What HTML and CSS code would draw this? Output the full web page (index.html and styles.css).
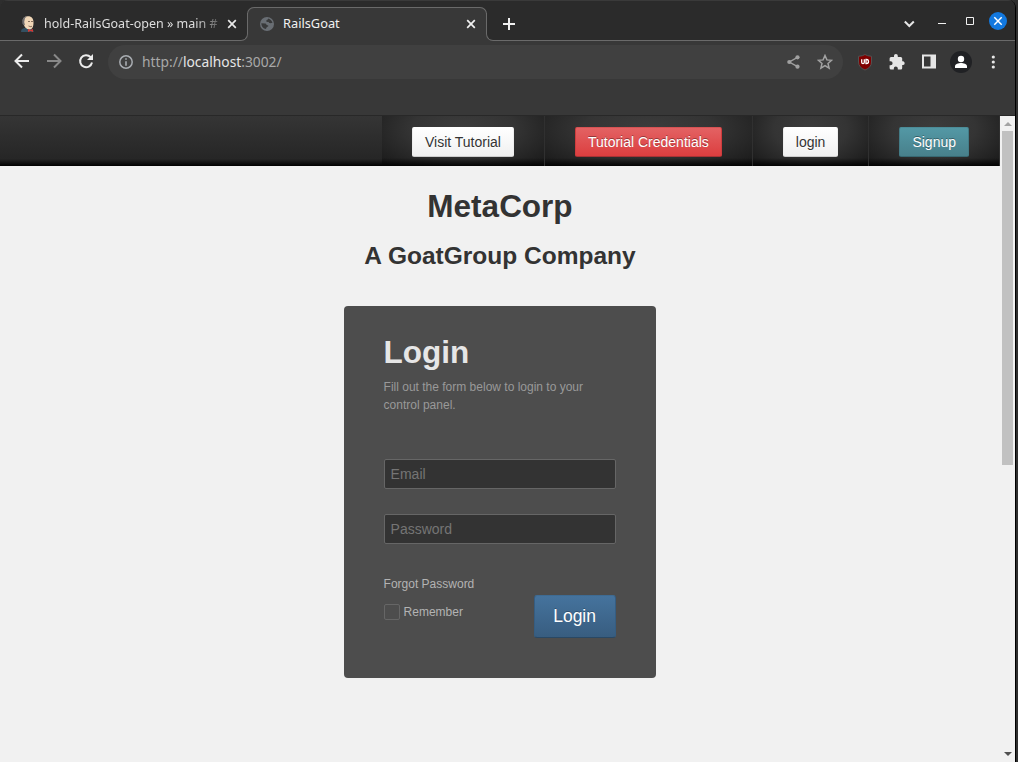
FILE: index.html
```html
<!DOCTYPE html>
<html lang="en">
<head>
<meta charset="utf-8">
<title>RailsGoat</title>
<link rel="stylesheet" href="styles.css">
</head>
<body>
<div class="window">
  <header class="tabstrip">
    <div class="tab tab-inactive">
      <svg class="favicon" width="16" height="16" viewBox="0 0 16 16">
        <path d="M1 16l.5-2.500L4 12h6l3 2 1 2z" fill="#335061"/>
        <path d="M3 6C2 2 5 .3 8 .3c4 0 5.500 2.700 5.500 6.200 0 4-1 7-4 7-3 0-6-3-6.500-7.500z" fill="#f0d6b7"/>
        <path d="M2.500 8C1.500 3 4 .3 7.500.300L5 2 4.200 6l.8 3.500z" fill="#6d6b6d"/>
        <path d="M8 5.500h2M11 5.500h2M8.500 10l2.500.8 1-.8" stroke="#6b5547" stroke-width=".8" fill="none"/>
        <path d="M8 13l2.500 1L13 13v3l-2.500-1L8 16z" fill="#d33833"/>
      </svg>
      <span class="tab-title title-long">hold-RailsGoat-open » main #</span>
      <svg class="tab-close" width="10" height="10" viewBox="0 0 10 10"><path d="M1.2 1.2l7.6 7.6M8.8 1.2L1.2 8.8" stroke="#e8e8e8" stroke-width="1.7"/></svg>
    </div>
    <div class="tab tab-active">
      <svg class="globe" width="14" height="14" viewBox="0 0 14 14"><circle cx="7" cy="7" r="7" fill="#696e74"/><path d="M1.3 6.2l4 .2c1.3.2.8 1.6 2.2 1.9 1.3.2.9 1.3 0 1.5-1.2.2-.8 1.8-2 2.3C3 11.500 1.300 9 1.300 6.200zM8.300 1.600c0 1.400-2 .9-2 2.300s2.500.5 2.700 1.600c.2.900 1.900.6 3.500.6C12 4 10.500 2.200 8.300 1.600z" fill="#38393a"/></svg>
      <span class="tab-title">RailsGoat</span>
      <svg class="tab-close" width="10" height="10" viewBox="0 0 10 10"><path d="M1.200 1.200l7.600 7.600M8.800 1.200L1.200 8.800" stroke="#f1f1f1" stroke-width="1.700"/></svg>
    </div>
    <div class="strip-rest">
      <svg class="new-tab" width="12" height="12" viewBox="0 0 12 12"><path d="M6 0v12M0 6h12" stroke="#f1f1f1" stroke-width="2"/></svg>
      <svg class="window-controls" width="104" height="20" viewBox="0 0 104 20">
        <path d="M.8 11.500l4.500 4.500 4.500-4.500" fill="none" stroke="#e4e4e4" stroke-width="2"/>
        <path d="M34 13.500h8" stroke="#f1f1f1"/>
        <path d="M62.500 7.500h7v7h-7z" fill="none" stroke="#f1f1f1"/>
        <circle cx="94" cy="11" r="9" fill="#1278df"/>
        <path d="M90.300 7.300l7.400 7.400M97.700 7.300l-7.400 7.400" stroke="#fff" stroke-width="1.500"/>
      </svg>
    </div>
  </header>
  <div class="toolbar">
    <svg class="nav-icons" width="80" height="16" viewBox="0 0 80 16">
      <g fill="none" stroke-width="2">
        <path d="M15 8H2M8 1.500L1.500 8 8 14.500" stroke="#ececec"/>
        <path d="M33 8h13M40 1.500L46.500 8 40 14.500" stroke="#898989"/>
        <path d="M76.600 4.200A6 6 0 1 0 78 9.500" stroke="#ececec"/>
      </g>
      <path d="M79 1v6h-6z" fill="#ececec"/>
    </svg>
    <div class="omnibox">
      <svg width="14" height="14" viewBox="0 0 14 14"><circle cx="7" cy="7" r="6.200" fill="none" stroke="#a9adb2" stroke-width="1.500"/><path d="M7 6.200v4.500M7 3.200v1.600" stroke="#a9adb2" stroke-width="1.600"/></svg>
      <span class="url">http://<span class="host">localhost</span>:3002/</span>
      <svg class="share" width="13" height="14" viewBox="0 0 13 14"><path d="M10.500 2.300L2.300 7l8.200 4.700" fill="none" stroke="#a0a0a0" stroke-width="1.400"/><g fill="#a0a0a0"><circle cx="10.500" cy="2.300" r="2.100"/><circle cx="2.300" cy="7" r="2.100"/><circle cx="10.500" cy="11.700" r="2.100"/></g></svg>
      <svg class="star" width="16" height="16" viewBox="0 0 16 16"><path d="M8 1.500l1.900 4.400 4.700.4-3.600 3.100 1.100 4.700L8 11.600l-4.100 2.500L5 9.400 1.400 6.300l4.700-.4z" fill="none" stroke="#a2a2a2" stroke-width="1.500"/></svg>
    </div>
    <svg class="extensions" width="119" height="22" viewBox="0 0 119 22">
      <path d="M5.500 5.300Q10 5 12 3.500 14 5 18.500 5.300V11q0 5.500-6.500 8-6.500-2.500-6.500-8z" fill="#800000" stroke="#525252"/>
      <path d="M8.700 8.300v3q0 1.300 1.300 1.300t1.300-1.300v-3M13 8.300v4.300h.5q2 0 2-2.100t-2-2.200z" fill="none" stroke="#fff" stroke-width="1.300"/>
      <path d="M50.200 10.300h-1V7.500A1.500 1.500 0 0 0 47.700 6h-2.900V4.800a1.900 1.900 0 0 0-3.800 0V6h-2.900a1.500 1.500 0 0 0-1.500 1.500v2.700h1a2 2 0 0 1 0 4h-1v2.900a1.500 1.500 0 0 0 1.500 1.500h2.700v-1a2 2 0 0 1 4 0v1h2.900a1.500 1.500 0 0 0 1.500-1.500V14h1a1.900 1.900 0 0 0 0-3.700z" fill="#e6e6e6"/>
      <path d="M69 3.500h14v14H69zM71 5.500v10h6.500v-10z" fill="#e6e6e6" fill-rule="evenodd"/>
      <circle cx="108" cy="11" r="11" fill="#202124"/>
      <circle cx="108" cy="8" r="3.200" fill="#fff"/><path d="M102 17v-1.600c0-2.200 3.500-3.300 6-3.300s6 1.100 6 3.300V17z" fill="#fff"/>
    </svg>
    <svg class="menu-dots" width="4" height="14" viewBox="0 0 4 14" fill="#e8e8e8"><circle cx="2.300" cy="2" r="1.600"/><circle cx="2.300" cy="7" r="1.600"/><circle cx="2.300" cy="12" r="1.600"/></svg>
  </div>
  <div class="viewport">
    <div class="page">
      <nav class="navbar">
        <div class="nav-item"><a class="btn btn-light">Visit Tutorial</a></div>
        <div class="nav-item"><a class="btn btn-danger">Tutorial Credentials</a></div>
        <div class="nav-item"><a class="btn btn-light">login</a></div>
        <div class="nav-item"><a class="btn btn-info">Signup</a></div>
      </nav>
      <main class="content">
        <h1 class="brand">MetaCorp</h1>
        <h2 class="tagline">A GoatGroup Company</h2>
        <form class="login-card">
          <h1 class="login-title">Login</h1>
          <p class="login-help">Fill out the form below to login to your control panel.</p>
          <input class="field" type="text" placeholder="Email">
          <input class="field" type="password" placeholder="Password">
          <div class="actions">
            <div class="options">
              <a class="forgot">Forgot Password</a>
              <label class="remember"><span class="checkbox"></span>Remember</label>
            </div>
            <button class="submit" type="button">Login</button>
          </div>
        </form>
      </main>
    </div>
    <div class="scrollbar">
      <svg width="8" height="4" viewBox="0 0 8 4"><path d="M0 4l4-4 4 4z" fill="#a3a3a3"/></svg>
      <div class="thumb"></div>
      <svg class="arrow-down" width="8" height="4" viewBox="0 0 8 4"><path d="M0 0h8L4 4z" fill="#505050"/></svg>
    </div>
  </div>
</div>
</body>
</html>
```
FILE: styles.css
```css
* { box-sizing: border-box; }
html, body { height: 100%; }
body {
  margin: 0;
  overflow: hidden;
  background: #2e2e2e;
  font-family: "Liberation Sans", Arial, sans-serif;
}
svg { display: block; flex: none; }
.window {
  display: flex;
  flex-direction: column;
  width: 1016px;
  height: 762px;
  border-right: 1px solid #000;
  border-radius: 8px 8px 0 0;
  overflow: hidden;
  background: #383838;
}

/* Tab strip */
.tabstrip {
  display: flex;
  height: 41px;
  background: #2b2b2b;
  border-top: 1px solid #3a3a3a;
  font-family: "Noto Sans", sans-serif;
}
.tab { display: flex; align-items: center; color: #f1f1f1; }
.tab-inactive {
  width: 248px;
  margin: 12px -1px 0 0;
  padding: 0 10px 5px 20px;
  background: #2b2b2b;
  border-bottom: 1px solid #6a6a6a;
  border-right: 1px solid #6a6a6a;
  border-bottom-right-radius: 7px;
  box-shadow: 4px 4px 0 #383838;
  clip-path: inset(-10px 0 0 0);
}
.tab-active {
  position: relative;
  width: 240px;
  margin-top: 6px;
  padding: 0 11px 1px 13px;
  background: #383838;
  border-radius: 7px 7px 0 0;
}
/* Upper outline; the neighbours draw the lower corners */
.tab-active::before {
  content: "";
  position: absolute;
  inset: 0 0 auto 0;
  height: 27px;
  border: 1px solid #6a6a6a;
  border-bottom: 0;
  border-radius: 7px 7px 0 0;
}
.tab-inactive, .strip-rest { position: relative; z-index: 1; }
.favicon { margin-right: 8px; }
.globe { margin-right: 9px; }
.tab-title { font-size: 12.800px; line-height: 18px; white-space: nowrap; }
.tab-active .tab-title { margin-top: -1px; }
.title-long {
  width: 174px;
  overflow: hidden;
  font-size: 12.500px;
  color: #dedede;
  -webkit-mask-image: linear-gradient(90deg, #000 150px, transparent 185px);
  mask-image: linear-gradient(90deg, #000 150px, transparent 185px);
}
.tab-close { margin-left: auto; }
.strip-rest {
  display: flex;
  flex: 1;
  margin: 12px 0 0 -1px;
  padding: 0 7px 0 16px;
  background: #2b2b2b;
  border-bottom: 1px solid #6a6a6a;
  border-left: 1px solid #6a6a6a;
  border-bottom-left-radius: 7px;
  box-shadow: -4px 4px 0 #383838;
  clip-path: inset(-12px 0 0 0);
}
.new-tab { margin-top: 5px; }
.window-controls { margin: -3px 0 0 auto; }

/* Toolbar */
.toolbar {
  display: flex;
  align-items: flex-start;
  height: 75px;
  padding: 4px 0 0 14px;
  border-bottom: 1px solid #282828;
}
.nav-icons { margin: 8px 14px 0 0; }
.omnibox {
  display: flex;
  align-items: center;
  width: 735px;
  height: 34px;
  padding: 0 10px 0 11px;
  border-radius: 17px;
  background: #404040;
  font-family: "Noto Sans", sans-serif;
}
.url { margin: -2px 0 0 9px; font-size: 13.800px; color: #a8a8a8; }
.host { color: #e6e6e6; }
.share { margin-left: auto; }
.star { margin-left: 17px; }
.extensions { margin: 6px 0 0 10px; }
.menu-dots { margin: 10px 0 0 19px; }

/* Page */
.viewport { display: flex; flex: 1; min-height: 0; }
.page { display: flex; flex-direction: column; width: 1000px; background: #f1f1f1; }
.navbar {
  display: flex;
  justify-content: flex-end;
  height: 50px;
  background: linear-gradient(#353535, #262626 86%, #000);
}
.nav-item {
  padding: 11px 30px 0;
  border-right: 1px solid #303030;
  background:
    linear-gradient(transparent 84%, rgba(0, 0, 0, .9)),
    radial-gradient(ellipse at 50% 25%, #3c3c3c, #343434 45%, #181818 100%);
}
.btn {
  display: block;
  height: 30px;
  padding: 0 12px;
  border: 1px solid;
  border-radius: 2px;
  font-size: 14px;
  line-height: 28px;
  white-space: nowrap;
}
.btn-light {
  color: #333;
  background: linear-gradient(#fff, #f0f0f0);
  border-color: #fff #eee #ccc;
  text-shadow: 0 1px 1px rgba(255, 255, 255, .75);
}
.btn-danger {
  color: #fff;
  background: linear-gradient(#e36263, #dc3e3f);
  border-color: #d55253 #cf3c3d #a83234;
  text-shadow: 0 -1px 0 rgba(0, 0, 0, .35);
}
.btn-info {
  color: #fff;
  background: linear-gradient(#5398a5, #48808b);
  border-color: #4b8c98 #437b86 #376872;
  text-shadow: 0 -1px 0 rgba(0, 0, 0, .35);
}
.content { display: flex; flex-direction: column; align-items: center; color: #333; }
.brand { margin: 20px 0 0; font-size: 31.500px; line-height: 40px; }
.tagline { margin: 10px 0 0; font-size: 24.500px; line-height: 40px; }
.login-card {
  width: 312px;
  height: 372px;
  margin: 30px .8px 0 0;
  padding: 26px 40px 0;
  border-radius: 4px;
  background: #4d4d4d;
}
.login-title { margin: 0; font-size: 31.500px; line-height: 40px; color: #e6e6e6; }
.login-help { margin: 6px 0 45px; font-size: 12px; line-height: 18px; color: #999; }
.field {
  display: block;
  width: 232px;
  height: 30px;
  margin: 0 0 25px;
  padding: 4px 6px;
  border: 1px solid #666;
  border-radius: 2px;
  background: #333;
  font: 14px/20px "Liberation Sans", Arial, sans-serif;
  color: #ccc;
}
.field::placeholder { color: #757575; opacity: 1; }
.actions { display: flex; justify-content: space-between; font-size: 12px; color: #b3b3b3; }
.options { display: flex; flex-direction: column; padding-top: 6px; }
.forgot { line-height: 18px; }
.remember { display: flex; align-items: center; height: 16px; margin-top: 11px; }
.checkbox { width: 16px; height: 16px; margin-right: 4px; border: 1px solid #666; border-radius: 2px; }
.submit {
  width: 82px;
  height: 43px;
  margin-top: 26px;
  padding: 0 0 2px;
  border: 1px solid;
  border-color: #3e6b93 #355d82 #294864;
  border-radius: 3px;
  background: linear-gradient(#45739d, #385d80);
  color: #fff;
  font: 17.500px/20px "Liberation Sans", Arial, sans-serif;
  text-shadow: 0 -1px 0 rgba(0, 0, 0, .25);
}

/* Scrollbar */
.scrollbar {
  display: flex;
  flex-direction: column;
  align-items: center;
  width: 15px;
  padding: 6px 0;
  background: #f1f1f1;
}
.thumb { width: 11px; height: 334px; margin-top: 5px; background: #c1c1c1; }
.arrow-down { margin-top: auto; }
```
